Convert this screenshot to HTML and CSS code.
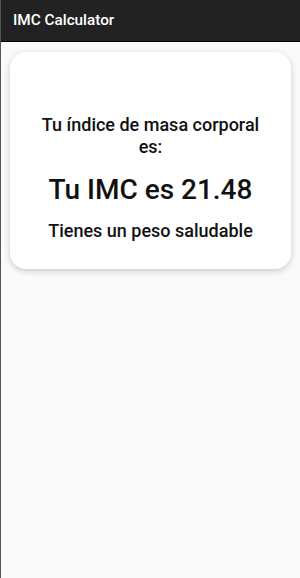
FILE: index.html
```html
<!DOCTYPE html>
<html lang="es">
<head>
<meta charset="utf-8">
<title>IMC Calculator</title>
<link rel="stylesheet" href="styles.css">
</head>
<body>
<div class="app">
  <header class="appbar">IMC Calculator</header>
  <main class="content">
    <section class="card">
      <p class="label">Tu índice de masa corporal es:</p>
      <p class="value">Tu IMC es 21.48</p>
      <p class="status">Tienes un peso saludable</p>
    </section>
  </main>
</div>
</body>
</html>
```
FILE: styles.css
```css
html, body {
  margin: 0;
  padding: 0;
  height: 100%;
}
body {
  background: #fafafa;
  font-family: Roboto, "Noto Sans", sans-serif;
}
.app {
  min-height: 100%;
  border-left: 1px solid #555;
  box-sizing: border-box;
}
.appbar {
  height: 41px;
  background: #222222;
  border-bottom: 1px solid #000;
  color: #fff;
  font-size: 15.3px;
  font-weight: 500;
  line-height: 41px;
  padding-left: 12px;
}
.content {
  padding: 10px 9px 0 9px;
}
.card {
  background: #fff;
  border-radius: 16px;
  box-shadow: 0 2px 6px rgba(0,0,0,0.2);
  padding: 62px 24px 27px;
  text-align: center;
  color: #111;
}
.card p {
  margin: 0;
}
.label {
  font-size: 18px;
  font-weight: 500;
  line-height: 22px;
}
.value {
  font-size: 28px;
  font-weight: 500;
  line-height: 34px;
  margin-top: 15px !important;
}
.status {
  font-size: 18px;
  font-weight: 500;
  line-height: 22px;
  margin-top: 13px !important;
}
```
